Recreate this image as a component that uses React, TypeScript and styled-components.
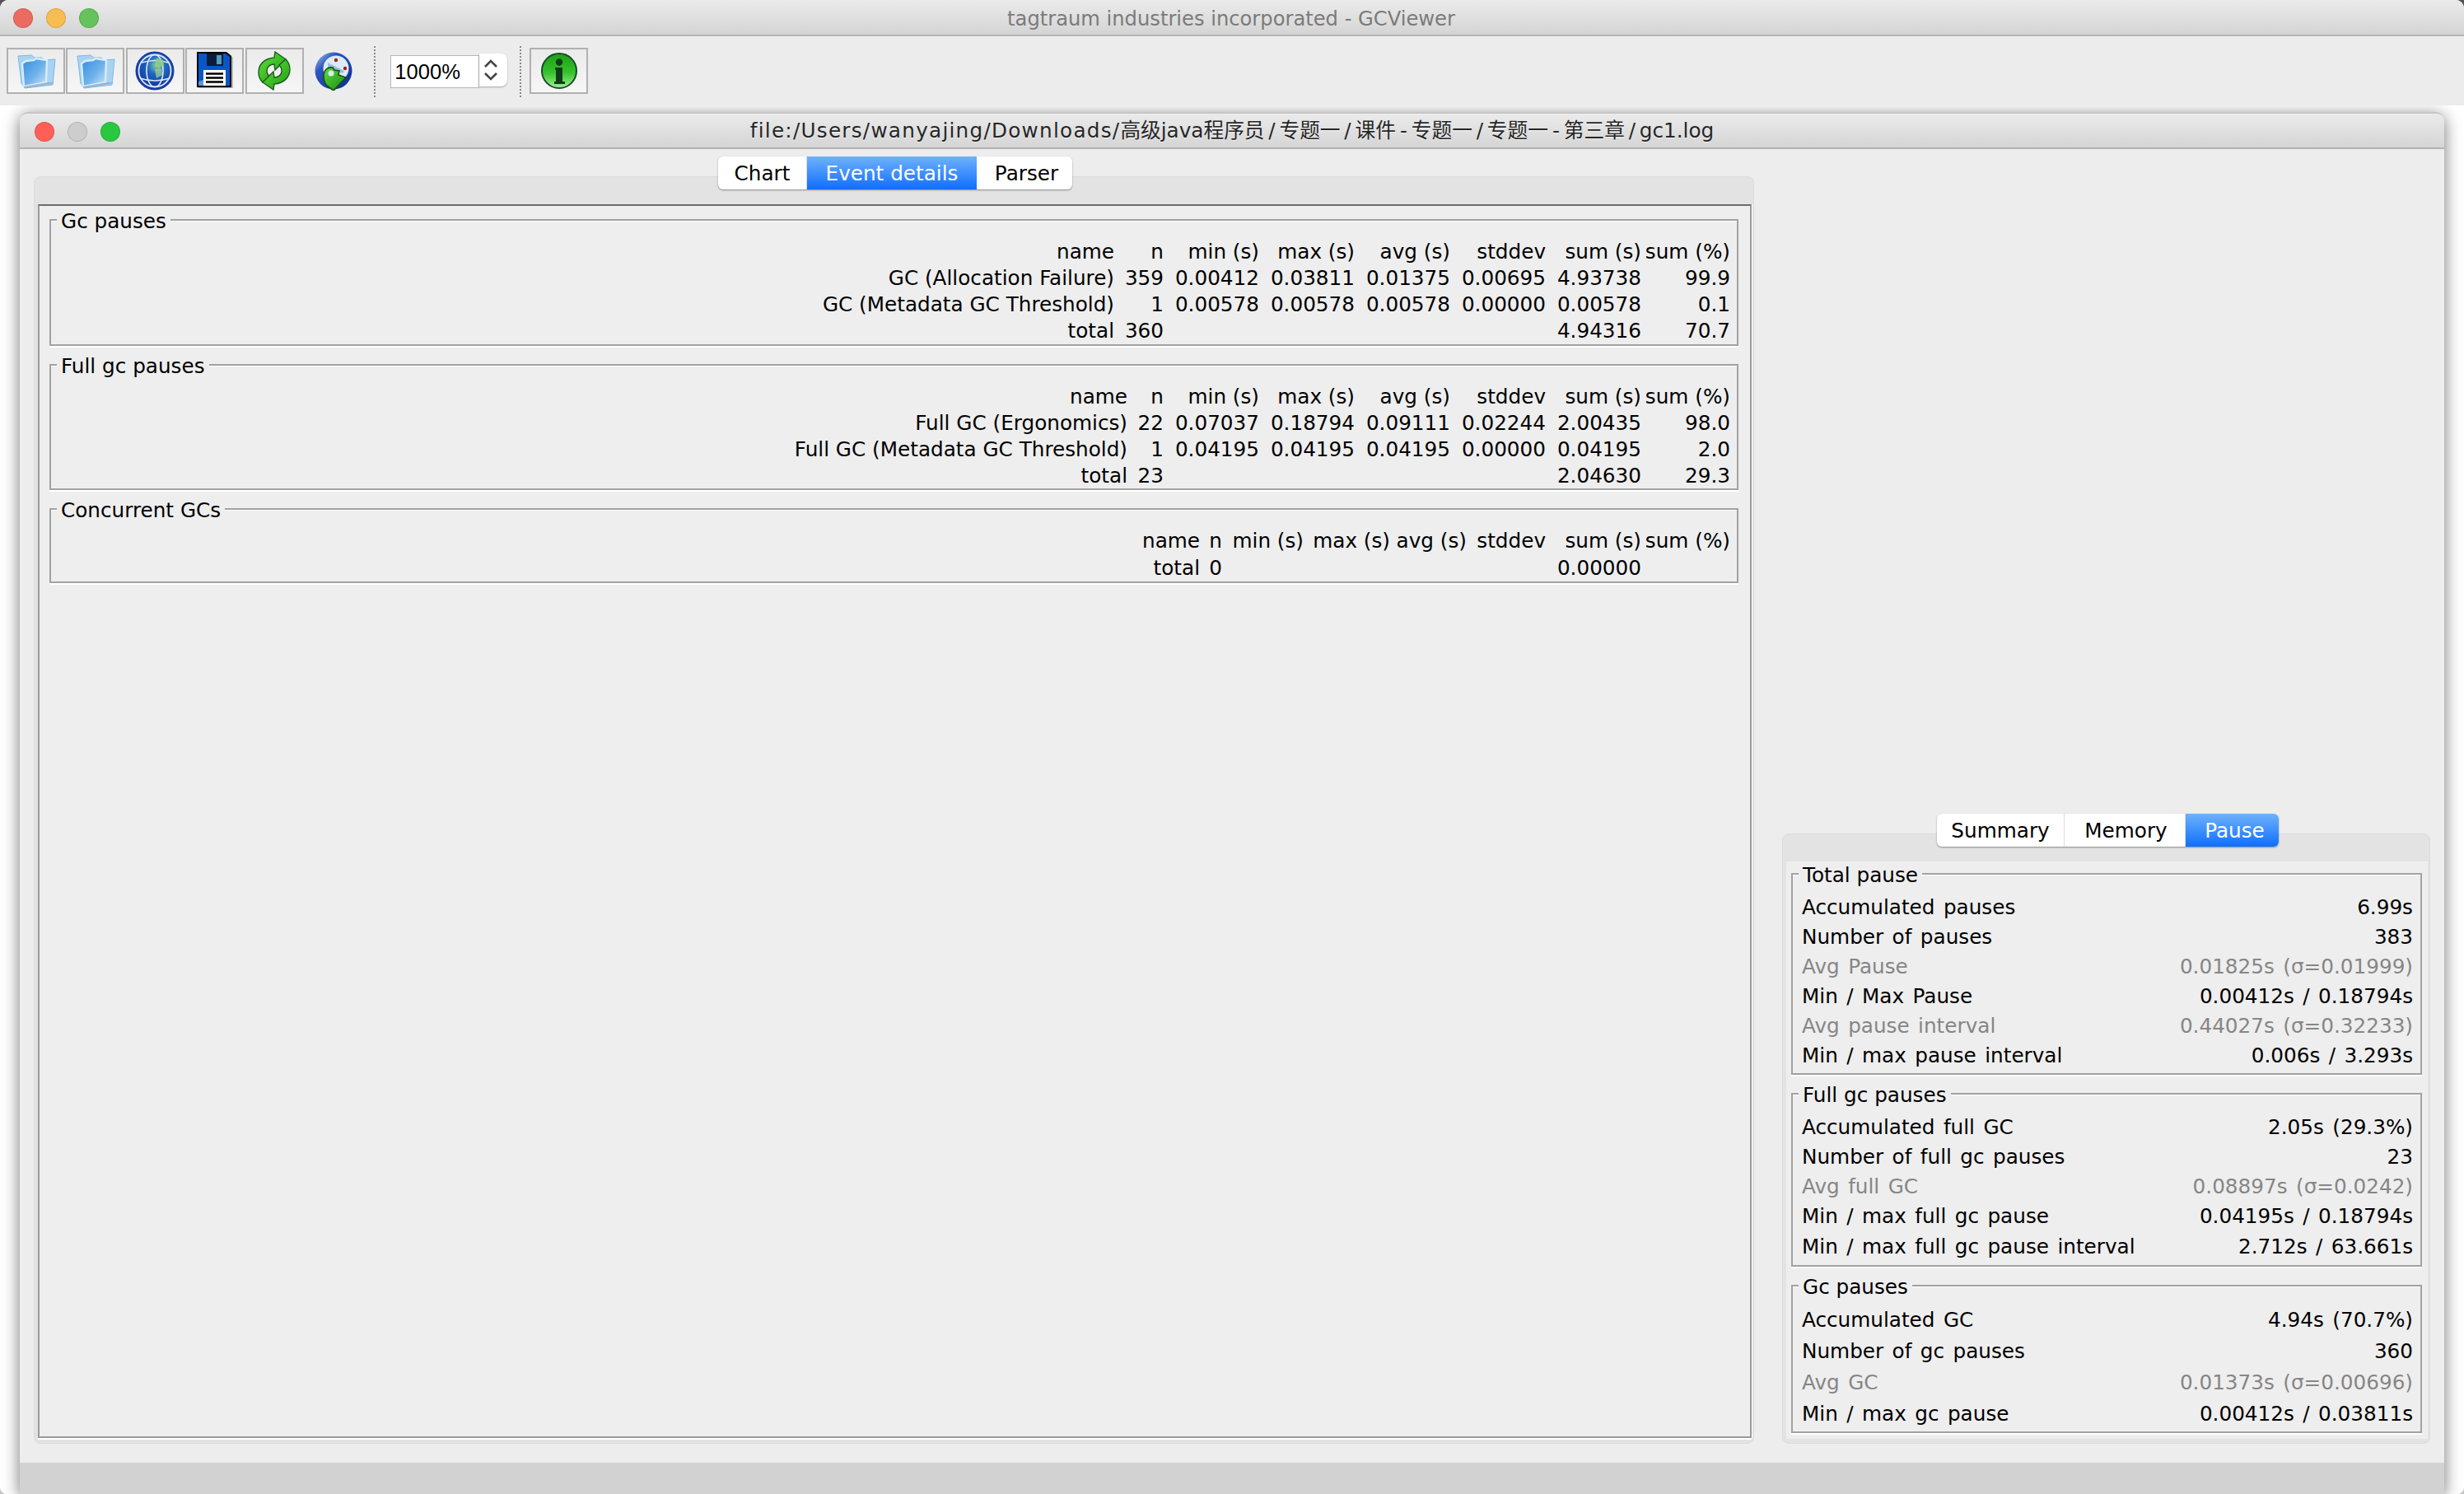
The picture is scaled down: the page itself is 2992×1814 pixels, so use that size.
import React from 'react';
import styled, { createGlobalStyle } from 'styled-components';

const Global = createGlobalStyle`
  html, body { margin: 0; padding: 0; background: linear-gradient(#555 0 50%, #c4c4c4 50%); }
  #root { width: 2992px; height: 1814px; }
  * { box-sizing: border-box; }
`;

const UI = `"DejaVu Sans", "Noto Sans CJK SC", sans-serif`;

const Frame = styled.div`
  width: 2992px; height: 1814px; display: flex; flex-direction: column;
  background: #fff; overflow: hidden; border-radius: 10px 10px 8px 8px;
  font-family: ${UI}; font-size: 24.7px; color: #000;
`;
const MainTitle = styled.header`
  position: relative; z-index: 2; height: 44px; flex: none; display: flex; align-items: center; justify-content: center;
  padding: 3px 2px 0 0;
  background: linear-gradient(#ebebeb, #d4d4d4); border-bottom: 2px solid #b4b4b4;
  color: #7b7b7b; font-size: 24.2px;
`;
const Lights = styled.div<{ $x: number; $y: number }>`
  position: absolute; left: ${p => p.$x}px; top: ${p => p.$y}px; display: flex; gap: 16px;
`;
const Light = styled.span<{ $c: string }>`
  width: 24px; height: 24px; border-radius: 50%; background: ${p => p.$c};
  box-shadow: inset 0 0 0 1px rgba(0,0,0,.12);
`;
const Toolbar = styled.div`
  position: relative; z-index: 2; height: 84px; flex: none; display: flex; align-items: flex-start;
  background: #ececec; padding: 14px 0 0 8px;
`;
const ToolButton = styled.button<{ $flat?: boolean }>`
  width: 71px; height: 56px; padding: 0; margin-right: 1.4px; display: flex; align-items: center; justify-content: center;
  border: 2px solid ${p => (p.$flat ? 'transparent' : '#b0b0b0')};
  background: ${p => (p.$flat ? 'transparent' : 'linear-gradient(#ebebeb, #f6f6f6)')};
`;
const Sep = styled.span<{ $l: number; $r: number }>`
  width: 0; height: 62px; margin: -2px ${p => p.$r}px 0 ${p => p.$l}px; border-left: 2px dotted #8a8a8a;
`;
const Spinner = styled.div`
  display: flex; align-items: flex-start; margin-top: 7px; height: 42px; width: 142px;
`;
const SpinField = styled.div`
  width: 108px; height: 40px; margin-top: 2px; background: #fff; border: 1px solid #b7b7b7; padding-left: 4px;
  font-family: "Liberation Sans", sans-serif; font-size: 25.6px; line-height: 39px; color: #000;
`;
const SpinStep = styled.div`
  width: 34px; height: 40px; background: #fff; border-radius: 0 8px 8px 0;
  box-shadow: 0 1px 2px rgba(0,0,0,.3); display: flex; align-items: center; justify-content: flex-start; padding-left: 3px;
`;
const Desktop = styled.div`
  flex: 1; min-height: 0; padding: 8px 24px 0; display: flex;
`;
const Win = styled.section`
  flex: 1; min-width: 0; display: flex; flex-direction: column; background: #ededed;
  border-radius: 10px 10px 0 0;
  box-shadow: 0 4px 20px rgba(0,0,0,.55);
`;
const WinTitle = styled.header`
  position: relative; height: 45px; flex: none; display: flex; align-items: center; justify-content: center;
  border-radius: 10px 10px 0 0;
  background: linear-gradient(#ebebeb, #d5d5d5); border-top: 2px solid #c6c6c6; border-bottom: 2px solid #b3b3b3;
  color: #262626; font-size: 24.7px; text-shadow: 0 1px 1px rgba(255,255,255,.6);
`;
const TitleText = styled.span`
  white-space: pre; line-height: 34px;
`;
const Tracked = styled.span`
  letter-spacing: 1.25px;
`;
const PathMark = styled.span<{ $m: number }>`
  margin: 0 ${p => p.$m}px;
`;
const WinBody = styled.div`
  flex: 1; min-height: 0; display: flex; padding: 9px 17px 23px 17px; gap: 34px;
`;
const StatusBar = styled.footer`
  height: 38px; flex: none; background: #d2d2d2;
`;
const TabColumn = styled.div<{ $w: number }>`
  width: ${p => p.$w}px; flex: none; display: flex; flex-direction: column; min-height: 0;
`;
const TabStrip = styled.div<{ $mt?: number; $ml: number }>`
  position: relative; z-index: 1; align-self: center; display: flex; flex: none; height: 40px;
  margin-top: ${p => p.$mt ?? 0}px; margin-left: ${p => p.$ml}px;
  background: #fff; border-radius: 6px; box-shadow: 0 1px 2px rgba(0,0,0,.4);
`;
const Tab = styled.div<{ $w: number; $on?: boolean; $last?: boolean; $pl?: number }>`
  width: ${p => p.$w}px; display: flex; align-items: center; justify-content: center; font-size: 24.7px;
  padding-left: ${p => p.$pl ?? 0}px;
  color: ${p => (p.$on ? '#fff' : '#000')};
  background: ${p => (p.$on ? 'linear-gradient(#6fb2fb, #0f6eff)' : 'transparent')};
  border-radius: ${p => (p.$on && p.$last ? '0 6px 6px 0' : '0')};
  border-right: ${p => (p.$on || p.$last ? 'none' : '1px solid #dedede')};
`;
const Pane = styled.div`
  flex: 1; min-height: 0; margin-top: -16px; display: flex; flex-direction: column;
  padding: 33px 2px 6px 4px;
  background: #e3e3e3; border: 1px solid #dcdcdc; border-radius: 8px;
`;
const DetailPanel = styled.div`
  flex: 1; min-height: 0; background: #eee; padding: 16px 14px 0 12px;
  border: 2px solid #999; border-top-color: #6c6c6c; box-shadow: 0 2px 0 #fff, 1px 0 0 #fff;
  display: flex; flex-direction: column; gap: 22px;
`;
const SummaryPanel = styled.div`
  flex: 1; min-height: 0; background: #eee; padding: 14px 7px 0 6px; margin: 0 0 -1px;
  display: flex; flex-direction: column; gap: 22px;
`;
const Group = styled.div<{ $pb: number }>`
  position: relative; flex: none; padding: 21px 0 ${p => p.$pb}px;
  border: 2px solid #a2a2a2; box-shadow: 0 2px 0 #fff, inset 0 1px 0 #fff;
`;
const Legend = styled.div`
  position: absolute; left: 7px; top: -14px; padding: 0 5px; background: #eee; line-height: 30px; white-space: nowrap;
`;
const StatGrid = styled.div<{ $cols: string; $row: number }>`
  display: grid; grid-template-columns: ${p => p.$cols}; grid-auto-rows: ${p => p.$row}px;
  justify-content: end; padding-right: 8px; align-items: center; text-align: right; white-space: nowrap;
`;
const InfoList = styled.div<{ $row: number }>`
  display: grid; grid-auto-rows: ${p => p.$row}px; align-items: center; padding: 0 9px 0 11px;
`;
const InfoRow = styled.div<{ $muted?: boolean }>`
  display: flex; justify-content: space-between; white-space: nowrap; word-spacing: 2.6px;
  color: ${p => (p.$muted ? '#868686' : '#000')};
`;

const FolderIcon = ({ id }: { id: string }) => (
  <svg width="50" height="46" viewBox="0 0 50 46">
    <defs>
      <linearGradient id={id} x1="0" y1="0" x2="1" y2="1">
        <stop offset="0" stopColor="#2f8ee0" /><stop offset=".55" stopColor="#6fb2ea" /><stop offset="1" stopColor="#cfe6f8" />
      </linearGradient>
    </defs>
    <path d="M3 5l16-1 4 3 9 0 1 3 15-1-3 31-34 4-4-6z" fill="#a9d3f2" stroke="#7db8e6" />
    <path d="M8 14l5-3 9-1 3-2 13 2-1 27-27 5z" fill={`url(#${id})`} stroke="#d8ecfa" strokeWidth="2.4" />
    <path d="M9 42l30-5 8 0-5 2-30 5z" fill="#8a9db0" opacity=".6" />
  </svg>
);
const GlobeIcon = () => (
  <svg width="48" height="48" viewBox="0 0 48 48">
    <defs>
      <radialGradient id="gl" cx=".55" cy=".35" r=".7">
        <stop offset="0" stopColor="#8fd0a0" /><stop offset=".35" stopColor="#1f68c2" /><stop offset="1" stopColor="#0a2a90" />
      </radialGradient>
    </defs>
    <circle cx="24" cy="24" r="22.5" fill="url(#gl)" stroke="#1c3fa5" strokeWidth="2" />
    <circle cx="24" cy="24" r="19.5" fill="none" stroke="#dfe6f7" strokeWidth="1.8" />
    <ellipse cx="24" cy="24" rx="10" ry="19.5" fill="none" stroke="#dfe6f7" strokeWidth="1.6" />
    <path d="M6 33q18 6 36 0M8 14q16-5 32 0" fill="none" stroke="#dfe6f7" strokeWidth="1.6" />
    <path d="M26 8l8 3 1 6-6 4-5-3z" fill="#8ccf84" opacity=".85" />
    <path d="M24 22l8-1 1 8-7 4z" fill="#a7d88b" opacity=".7" />
  </svg>
);
const FloppyIcon = () => (
  <svg width="46" height="46" viewBox="0 0 46 46">
    <path d="M3 2h37l5 5v37H3z" fill="#7b7b7b" opacity=".5" />
    <path d="M1 0h36l6 5v38H1z" fill="#000" />
    <path d="M3 2h33l5 4v35H3z" fill="#0a56c4" />
    <path d="M13 2h20v15H13z" fill="#0b1c3a" />
    <path d="M25 4h6v11h-6z" fill="#4ea0b8" />
    <path d="M9 22h27v19H9z" fill="#fff" />
    <path d="M12 26.5h21M12 31.5h21M12 36.5h21" stroke="#000" strokeWidth="2.6" />
    <path d="M3 36l6-2v7H3z" fill="#5d95e0" />
  </svg>
);
const RefreshIcon = () => (
  <svg width="40" height="48" viewBox="0 0 40 48">
    <defs>
      <linearGradient id="rf" x1="0" y1="0" x2="1" y2="1">
        <stop offset="0" stopColor="#62e23a" /><stop offset="1" stopColor="#1f9a12" />
      </linearGradient>
    </defs>
    <path d="M21 1l-1 7C8 9 1 16 1 26c0 5 2 9 5 12l8-7c-2-2-3-4-3-7 0-5 4-8 9-8l1 7 13-13z" fill="url(#rf)" stroke="#1c5c1c" strokeWidth="1.4" />
    <path d="M19 47l1-7c12-1 19-8 19-18 0-5-2-9-5-12l-8 7c2 2 3 4 3 7 0 5-4 8-9 8l-1-7L6 38z" fill="url(#rf)" stroke="#1c5c1c" strokeWidth="1.4" />
  </svg>
);
const ClockIcon = () => (
  <svg width="46" height="48" viewBox="0 0 46 48">
    <defs>
      <linearGradient id="ck" x1="0" y1="0" x2="1" y2="1">
        <stop offset="0" stopColor="#b9cdf0" /><stop offset=".3" stopColor="#2a55c0" /><stop offset="1" stopColor="#0a2a92" />
      </linearGradient>
      <linearGradient id="ca" x1="0" y1="0" x2="1" y2="1">
        <stop offset="0" stopColor="#5fdb3c" /><stop offset="1" stopColor="#178a12" />
      </linearGradient>
    </defs>
    <circle cx="23" cy="24" r="22.5" fill="url(#ck)" />
    <circle cx="26" cy="21" r="15.5" fill="#dcebf6" />
    <circle cx="26" cy="11" r="2.2" fill="#a81f1f" />
    <circle cx="37" cy="21" r="2.2" fill="#a81f1f" />
    <path d="M16 14l20 10-2 3-18-6z" fill="#6ea3d6" opacity=".6" />
    <path d="M11 30c0-7 5-11 11-10l2 3 6 1-1 5 9 3-15 16-8-6c-3-3-4-8-4-12z" fill="url(#ca)" stroke="#164f16" strokeWidth="1.6" />
    <circle cx="20" cy="27" r="3.5" fill="#dcebf6" />
  </svg>
);
const InfoIcon = () => (
  <svg width="44" height="44" viewBox="0 0 44 44">
    <defs>
      <linearGradient id="inf" x1="0" y1="0" x2="0" y2="1">
        <stop offset="0" stopColor="#1d9f16" /><stop offset=".55" stopColor="#35c22b" /><stop offset="1" stopColor="#a5ee96" />
      </linearGradient>
    </defs>
    <circle cx="22" cy="22" r="21" fill="url(#inf)" stroke="#154d2a" strokeWidth="2" />
    <circle cx="22" cy="11.5" r="4.2" fill="#0d3d16" />
    <path d="M17 18h9v17h3v3H16v-3h2V21h-1z" fill="#0d3d16" />
  </svg>
);
const Chevrons = () => (
  <svg width="22" height="34" viewBox="0 0 22 34" fill="none" stroke="#444" strokeWidth="2.6">
    <path d="M4 13l7-7 7 7M4 21l7 7 7-7" />
  </svg>
);

type Row = string[];
const HEAD_S = ['name', 'n', 'min (s)', 'max (s)', 'avg (s)', 'stddev', 'sum (s)', 'sum (%)'];
const tables: { title: string; cols: string; row: number; pb: number; rows: Row[] }[] = [
  { title: 'Gc pauses', cols: '600px 60px 116px 116px 116px 116px 116px 108px', row: 32, pb: 1, rows: [
    HEAD_S,
    ['GC (Allocation Failure)', '359', '0.00412', '0.03811', '0.01375', '0.00695', '4.93738', '99.9'],
    ['GC (Metadata GC Threshold)', '1', '0.00578', '0.00578', '0.00578', '0.00000', '0.00578', '0.1'],
    ['total', '360', '', '', '', '', '4.94316', '70.7'],
  ] },
  { title: 'Full gc pauses', cols: '600px 44px 116px 116px 116px 116px 116px 108px', row: 32, pb: 0, rows: [
    HEAD_S,
    ['Full GC (Ergonomics)', '22', '0.07037', '0.18794', '0.09111', '0.02244', '2.00435', '98.0'],
    ['Full GC (Metadata GC Threshold)', '1', '0.04195', '0.04195', '0.04195', '0.00000', '0.04195', '2.0'],
    ['total', '23', '', '', '', '', '2.04630', '29.3'],
  ] },
  { title: 'Concurrent GCs', cols: '300px 27px 99px 105px 93px 96px 116px 108px', row: 33, pb: 0, rows: [
    HEAD_S,
    ['total', '0', '', '', '', '', '0.00000', ''],
  ] },
];

type Info = [string, string, boolean?];
const summaries: { title: string; row: number; pb: number; items: Info[] }[] = [
  { title: 'Total pause', row: 36, pb: 4, items: [
    ['Accumulated pauses', '6.99s'], ['Number of pauses', '383'],
    ['Avg Pause', '0.01825s (σ=0.01999)', true], ['Min / Max Pause', '0.00412s / 0.18794s'],
    ['Avg pause interval', '0.44027s (σ=0.32233)', true], ['Min / max pause interval', '0.006s / 3.293s'],
  ] },
  { title: 'Full gc pauses', row: 36.25, pb: 5, items: [
    ['Accumulated full GC', '2.05s (29.3%)'], ['Number of full gc pauses', '23'],
    ['Avg full GC', '0.08897s (σ=0.0242)', true], ['Min / max full gc pause', '0.04195s / 0.18794s'],
    ['Min / max full gc pause interval', '2.712s / 63.661s'],
  ] },
  { title: 'Gc pauses', row: 38, pb: 3, items: [
    ['Accumulated GC', '4.94s (70.7%)'], ['Number of gc pauses', '360'],
    ['Avg GC', '0.01373s (σ=0.00696)', true], ['Min / max gc pause', '0.00412s / 0.03811s'],
  ] },
];

const Slash = () => <PathMark $m={4.8}>/</PathMark>;
const Dash = () => <PathMark $m={5}>-</PathMark>;

export default function App() {
  return (
    <Frame>
      <Global />
      <MainTitle>
        <Lights $x={16} $y={10}>
          <Light $c="#ec6b61" /><Light $c="#f6bd52" /><Light $c="#64c35a" />
        </Lights>
        tagtraum industries incorporated - GCViewer
      </MainTitle>
      <Toolbar>
        <ToolButton><FolderIcon id="f1" /></ToolButton>
        <ToolButton><FolderIcon id="f2" /></ToolButton>
        <ToolButton><GlobeIcon /></ToolButton>
        <ToolButton><FloppyIcon /></ToolButton>
        <ToolButton><RefreshIcon /></ToolButton>
        <ToolButton $flat><ClockIcon /></ToolButton>
        <Sep $l={12} $r={18} />
        <Spinner>
          <SpinField>1000%</SpinField>
          <SpinStep><Chevrons /></SpinStep>
        </Spinner>
        <Sep $l={15} $r={10} />
        <ToolButton><InfoIcon /></ToolButton>
      </Toolbar>
      <Desktop>
        <Win>
          <WinTitle>
            <Lights $x={18} $y={10}>
              <Light $c="#ff5f57" /><Light $c="#cdcdcd" /><Light $c="#28c840" />
            </Lights>
            <TitleText>
              <Tracked>file:/Users/wanyajing/Downloads/</Tracked>高级java程序员<Slash />专题一<Slash />课件<Dash />专题一<Slash />专题一<Dash />第三章<Slash />gc1.log
            </TitleText>
          </WinTitle>
          <WinBody>
            <TabColumn $w={2089}>
              <TabStrip $ml={3}>
                <Tab $w={108}>Chart</Tab>
                <Tab $w={206} $on>Event details</Tab>
                <Tab $w={116} $last $pl={5}>Parser</Tab>
              </TabStrip>
              <Pane>
                <DetailPanel>
                  {tables.map(t => (
                    <Group key={t.title} $pb={t.pb}>
                      <Legend>{t.title}</Legend>
                      <StatGrid $cols={t.cols} $row={t.row}>
                        {t.rows.flatMap((r, i) => r.map((c, j) => <div key={`${i}-${j}`}>{c}</div>))}
                      </StatGrid>
                    </Group>
                  ))}
                </DetailPanel>
              </Pane>
            </TabColumn>
            <TabColumn $w={787}>
              <TabStrip $mt={798} $ml={4}>
                <Tab $w={155}>Summary</Tab>
                <Tab $w={147} $pl={3}>Memory</Tab>
                <Tab $w={113} $on $last $pl={6}>Pause</Tab>
              </TabStrip>
              <Pane>
                <SummaryPanel>
                  {summaries.map(s => (
                    <Group key={s.title} $pb={s.pb}>
                      <Legend>{s.title}</Legend>
                      <InfoList $row={s.row}>
                        {s.items.map(([k, v, m]) => (
                          <InfoRow key={k} $muted={m}><span>{k}</span><span>{v}</span></InfoRow>
                        ))}
                      </InfoList>
                    </Group>
                  ))}
                </SummaryPanel>
              </Pane>
            </TabColumn>
          </WinBody>
          <StatusBar />
        </Win>
      </Desktop>
    </Frame>
  );
}
